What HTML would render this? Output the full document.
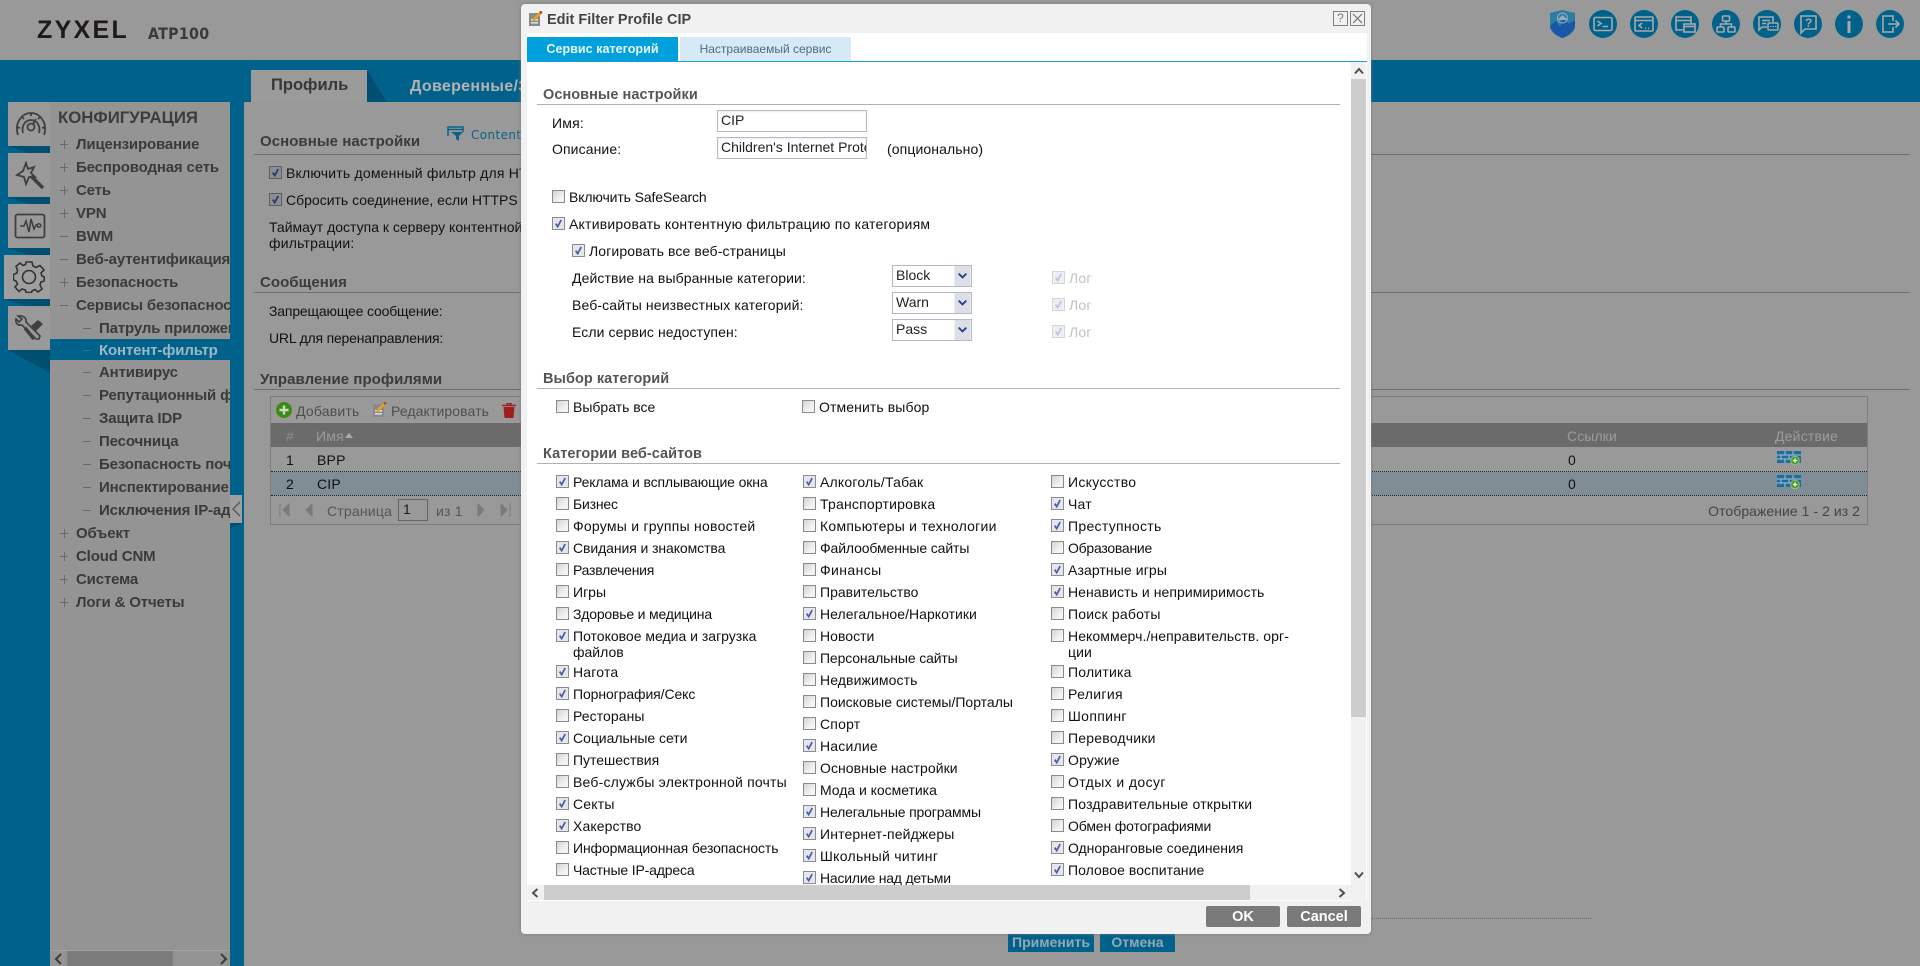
<!DOCTYPE html>
<html lang="ru"><head><meta charset="utf-8"><title>Zyxel ATP100</title>
<style>
html,body{margin:0;padding:0;width:1920px;height:966px;overflow:hidden;background:#00618a}
body{position:relative;font:14px/16px "Liberation Sans","Noto Sans CJK SC",sans-serif;color:#1c1c1c}
div,span,svg,a{position:absolute;white-space:nowrap}
.b{font-weight:bold}
.r{background:#999}
.h{font-weight:bold;font-size:15px;color:#3b3b3b;letter-spacing:.05px}
.l{height:1px;background:#6f6f6f}
.m{font-weight:bold;font-size:15px;color:#3a3a3a;left:76px;letter-spacing:-.15px}
.s{left:99px}
.p{left:60px;width:8px;height:1px;background:#6a6a6a}
.p.plus:after{content:"";position:absolute;left:3.5px;top:-4px;width:1px;height:9px;background:#6a6a6a}
.k{width:13px;height:13px;box-sizing:border-box;border:1px solid #8b8b8b;background:linear-gradient(135deg,#d4d4d4,#f4f4f4 70%);display:block}
.c{padding-left:17px;letter-spacing:.2px;color:#111;height:16px}
.c svg{left:0;top:1px}
.n{letter-spacing:.2px;color:#111}
.g{font-weight:bold;font-size:14.5px;color:#555;letter-spacing:.05px}
.i{box-sizing:border-box;border:1px solid #b5b8c8;background:#fff;height:22px;padding:1px 3px 1px 3px;overflow:hidden;line-height:17px;color:#222;box-shadow:inset 0 1px 2px #eee}
.se{left:892px;width:80px;height:22px;box-sizing:border-box;border:1px solid #b5b8c8;background:#fff;line-height:19px;padding-left:3px;color:#222}
.se svg{right:0;top:0}
.dis{color:#c2c2c2}
.t{fill:none;stroke:#a9a9a9;stroke-width:1.6}
.w{fill:none;stroke:#3f3f3f;stroke-width:1.8}
</style></head><body>
<svg width="0" height="0" style="left:0;top:0"><defs>
<symbol id="ck" viewBox="0 0 13 13"><rect x=".5" y=".5" width="12" height="12" fill="#e8e8e8" stroke="#8b8b8b"/><rect x="2" y="2" width="9" height="9" fill="#e3e6f2"/><path d="M3.7 6.6 5.7 9.6 9.2 3" fill="none" stroke="#4a5b9d" stroke-width="1.7"/></symbol>
<symbol id="cd" viewBox="0 0 13 13"><rect x=".5" y=".5" width="12" height="12" fill="#f0f0f0" stroke="#d5d5d5"/><rect x="2" y="2" width="9" height="9" fill="#eceef6"/><path d="M3.7 6.6 5.7 9.6 9.2 3" fill="none" stroke="#bcc4dd" stroke-width="1.7"/></symbol>
<symbol id="cg" viewBox="0 0 13 13"><rect x=".5" y=".5" width="12" height="12" fill="#8e8e8e" stroke="#5e5e5e"/><rect x="2" y="2" width="9" height="9" fill="#8a8c97"/><path d="M3.7 6.6 5.7 9.6 9.2 3" fill="none" stroke="#2c375f" stroke-width="1.7"/></symbol>
<symbol id="sb" viewBox="0 0 17 21"><rect width="17" height="21" fill="#dcdfe6"/><path d="M4.5 8 8.5 12 12.5 8" fill="none" stroke="#25408a" stroke-width="2"/></symbol>
<symbol id="ed" viewBox="0 0 14 15"><rect x="0" y="2" width="11" height="13" fill="#8a8a8a"/><rect x="2" y="8" width="7" height="1.6" fill="#ddd"/><rect x="2" y="11" width="7" height="1.6" fill="#ddd"/><path d="M4 9 12 1.500" stroke="#e8a016" stroke-width="2.600" fill="none"/><path d="M11 2 12.800.4" stroke="#c0392b" stroke-width="2.600"/></symbol>
<symbol id="fw" viewBox="0 0 24 14"><rect width="24" height="12" fill="#1f6d9c"/><path d="M0 4H24M0 8H17M8 0V4M16 0V4M4 4V8M12 4V8M8 8V12" stroke="#a9c2d0" stroke-width="1" fill="none"/><circle cx="18" cy="9.500" r="4.300" fill="#4a9a22" stroke="#9dbb86"/><path d="M15.800 9.500H20.200M18 7.300V11.700" stroke="#dfe" stroke-width="1.300"/></symbol>
</defs></svg>

<!-- header -->
<div class="r" style="left:0;top:0;width:1920px;height:60px"></div>
<div class="b" style="left:37px;top:15px;font-size:25px;line-height:30px;color:#1f1a17;letter-spacing:2.3px;font-family:'Liberation Sans',sans-serif">ZYXEL</div>
<div class="b" style="left:148px;top:25px;font-size:16px;line-height:18px;color:#3a3a3a;letter-spacing:.3px;font-family:'DejaVu Sans',sans-serif;transform-origin:0 0;transform:scaleX(.89)">ATP100</div>

<svg style="left:1549px;top:9px" width="27" height="30" viewBox="0 0 27 30"><path d="M1 4 13 1 26 4V16C26 23 19 27 13.500 29 8 27 1 23 1 16Z" fill="#2c7da3"/><path d="M1 17 7 12 11 18 14 10 20 15 26 11V16C26 23 19 27 13.500 29 8 27 1 23 1 16Z" fill="#1957a6"/><path d="M13.500 6 19 11H8Z" fill="#9ab" /><circle cx="13.500" cy="9" r="5" fill="none" stroke="#9ab"/></svg>

<svg style="left:1589px;top:10px" width="28" height="28" viewBox="0 0 28 28"><circle cx="14" cy="14" r="14" fill="#00618a"/><rect class="t" x="5" y="7.500" width="18" height="13" rx="1.500"/><path class="t" d="M8.500 11 12 13.500 8.500 16M13.500 16.500H19"/></svg>
<svg style="left:1630px;top:10px" width="28" height="28" viewBox="0 0 28 28"><circle cx="14" cy="14" r="14" fill="#00618a"/><rect class="t" x="5" y="7" width="18" height="14" rx="1"/><path class="t" d="M5 10.500H23M12 13 9 15.500 12 18M15 18.300H16M18 18.300H19"/></svg>
<svg style="left:1671px;top:10px" width="28" height="28" viewBox="0 0 28 28"><circle cx="14" cy="14" r="14" fill="#00618a"/><path class="t" d="M12 20H5V7H20V13M5 10.500H20"/><rect class="t" x="13" y="14" width="11" height="8"/><path class="t" d="M13 16.500H24"/></svg>
<svg style="left:1712px;top:10px" width="28" height="28" viewBox="0 0 28 28"><circle cx="14" cy="14" r="14" fill="#00618a"/><rect class="t" x="10.500" y="6" width="7" height="5" rx="1"/><rect class="t" x="5" y="17" width="7" height="5" rx="1"/><rect class="t" x="16" y="17" width="7" height="5" rx="1"/><path class="t" d="M14 11V14M8.500 17V14H19.500V17"/></svg>
<svg style="left:1753px;top:10px" width="28" height="28" viewBox="0 0 28 28"><circle cx="14" cy="14" r="14" fill="#00618a"/><path class="t" d="M14 17H9L6 20V7H20V12M9 10.500H17M9 13.500H13"/><rect class="t" x="15" y="13" width="10" height="7" rx="1"/><path d="M17 16.500H18.500M19.500 16.500H21M22 16.500H23.500" stroke="#a9a9a9"/></svg>
<svg style="left:1794px;top:10px" width="28" height="28" viewBox="0 0 28 28"><circle cx="14" cy="14" r="14" fill="#00618a"/><path class="t" d="M7 6H22V19H11L7 23Z"/><text x="11" y="17" font-size="12" font-weight="bold" fill="#a9a9a9" font-family="Liberation Sans">?</text></svg>
<svg style="left:1835px;top:10px" width="28" height="28" viewBox="0 0 28 28"><circle cx="14" cy="14" r="14" fill="#00618a"/><rect x="12.500" y="5.500" width="3" height="3" fill="#a9a9a9"/><rect x="12.500" y="11" width="3" height="12" fill="#a9a9a9"/></svg>
<svg style="left:1876px;top:10px" width="28" height="28" viewBox="0 0 28 28"><circle cx="14" cy="14" r="14" fill="#00618a"/><path class="t" d="M17 11V6H7V22H17V17M12 14H23M19.500 10.500 23 14 19.500 17.500"/></svg>

<!-- left tabs -->
<div class="r" style="left:8px;top:102px;width:42px;height:44px"></div>
<svg style="left:8px;top:146px" width="42" height="7"><path d="M0 0H42V7H20Z" fill="#004f70"/></svg>
<div class="r" style="left:8px;top:153px;width:42px;height:44px"></div>
<svg style="left:8px;top:197px" width="42" height="7"><path d="M0 0H42V7H20Z" fill="#004f70"/></svg>
<div class="r" style="left:8px;top:204px;width:42px;height:44px"></div>
<svg style="left:8px;top:248px" width="42" height="7"><path d="M0 0H42V7H20Z" fill="#004f70"/></svg>
<div style="left:4px;top:255px;width:46px;height:44px;background:#9e9e9e"></div>
<svg style="left:4px;top:299px" width="46" height="7"><path d="M0 0H46V7H22Z" fill="#004f70"/></svg>
<div class="r" style="left:8px;top:306px;width:42px;height:44px"></div>
<svg style="left:8px;top:350px" width="42" height="23"><path d="M0 0H42V23Z" fill="#004f70"/></svg>

<svg style="left:14px;top:111px" width="34" height="28" viewBox="0 0 34 28"><path class="w" d="M4 24C0 12 8 2 17 2S34 12 30 24M3 16 6 17M28 17 31 16M17 2V5M8 6 10 8M26 6 24 8M19 13 22 8M9 22C7 14 12 9 17 9S27 14 25 22" fill="none"/><circle class="w" cx="17" cy="16" r="3.500"/></svg>
<svg style="left:15px;top:161px" width="30" height="30" viewBox="0 0 30 30"><path class="w" d="M11 2 13 8 19 6 16 12 20 16 14 16 11 23 9 16 2 14 8 10Z"/><path d="M16 15 28 27" stroke="#3f3f3f" stroke-width="3.500"/></svg>
<svg style="left:14px;top:213px" width="32" height="26" viewBox="0 0 32 26"><rect class="w" x="1.500" y="1.500" width="29" height="23" rx="2"/><path d="M6 13H10L12 8 15 19 17 6 20 16 22 12H24" fill="none" stroke="#3f3f3f" stroke-width="1.600"/><circle cx="25" cy="12.500" r="1.800" fill="none" stroke="#3f3f3f" stroke-width="1.500"/></svg>
<svg style="left:13px;top:261px" width="32" height="32" viewBox="0 0 32 32"><path d="M13 1H19L20 5 23 6.500 27 4.500 31 9 28 12 29 15 31.500 16 31 20 28 21 27 24 29 28 25 31 22 28.500 19 30 18.500 31.500H13L12.500 29 9 28 6 30.500 2 26 4.500 23 3 20 .5 19V13.500L4 12 4.500 9 3 5.500 7 2 10 4.500 12.500 3.500Z" fill="none" stroke="#333" stroke-width="1.600"/><circle cx="16" cy="16" r="6.500" fill="none" stroke="#333" stroke-width="1.600"/></svg>
<svg style="left:14px;top:314px" width="30" height="28" viewBox="0 0 30 28"><path d="M4 2 8 5 5 8 2 5C1 9 4 12 8 11L22 25 25 25 26 22 12 8C13 4 9 1 4 2Z" fill="none" stroke="#3f3f3f" stroke-width="1.600"/><path d="M17 12 24 6 29 10 22 17Z" fill="#3f3f3f"/><path d="M11 14 20 25" stroke="#3f3f3f" stroke-width="3.500"/></svg>

<!-- left menu -->
<div style="left:50px;top:102px;width:180px;height:864px;background:#949494;overflow:hidden">
 <div style="left:8px;top:6px;font-weight:bold;font-size:16.800px;line-height:20px;color:#3c3c3c">КОНФИГУРАЦИЯ</div>
 <div style="left:0;top:237px;width:180px;height:21px;background:#00618a"></div>
 <div style="left:0;top:848px;width:180px;height:1px;background:#a3a3a3"></div>
 <div style="left:17px;top:849px;width:106px;height:15px;background:#7c7c7c"></div>
 <svg style="left:4px;top:851px" width="10" height="12" viewBox="0 0 10 12"><path d="M7 1 2 6 7 11" fill="none" stroke="#3c3c3c" stroke-width="2"/></svg>
 <svg style="left:168px;top:851px" width="10" height="12" viewBox="0 0 10 12"><path d="M3 1 8 6 3 11" fill="none" stroke="#3c3c3c" stroke-width="2"/></svg>
</div>
<div style="left:0;top:0;width:230px;height:966px;overflow:hidden">
<div class="p plus" style="top:144px"></div><div class="m" style="top:137px">Лицензирование</div>
<div class="p plus" style="top:167px"></div><div class="m" style="top:160px">Беспроводная сеть</div>
<div class="p plus" style="top:190px"></div><div class="m" style="top:183px">Сеть</div>
<div class="p plus" style="top:213px"></div><div class="m" style="top:206px">VPN</div>
<div class="p" style="top:236px"></div><div class="m" style="top:229px">BWM</div>
<div class="p" style="top:259px"></div><div class="m" style="top:252px">Веб-аутентификация</div>
<div class="p plus" style="top:282px"></div><div class="m" style="top:275px">Безопасность</div>
<div class="p" style="top:305px"></div><div class="m" style="top:298px">Сервисы безопасности</div>
<div class="p" style="left:83px;top:328px"></div><div class="m s" style="top:321px">Патруль приложений</div>
<div class="p" style="left:83px;top:350px;background:#2d6f8d"></div><div class="m s" style="top:343px;color:#9cb8c5">Контент-фильтр</div>
<div class="p" style="left:83px;top:372px"></div><div class="m s" style="top:365px">Антивирус</div>
<div class="p" style="left:83px;top:395px"></div><div class="m s" style="top:388px">Репутационный фильтр</div>
<div class="p" style="left:83px;top:418px"></div><div class="m s" style="top:411px">Защита IDP</div>
<div class="p" style="left:83px;top:441px"></div><div class="m s" style="top:434px">Песочница</div>
<div class="p" style="left:83px;top:464px"></div><div class="m s" style="top:457px">Безопасность почты</div>
<div class="p" style="left:83px;top:487px"></div><div class="m s" style="top:480px">Инспектирование</div>
<div class="p" style="left:83px;top:510px"></div><div class="m s" style="top:503px">Исключения IP-адресов</div>
<div class="p plus" style="top:533px"></div><div class="m" style="top:526px">Объект</div>
<div class="p plus" style="top:556px"></div><div class="m" style="top:549px">Cloud CNM</div>
<div class="p plus" style="top:579px"></div><div class="m" style="top:572px">Система</div>
<div class="p plus" style="top:602px"></div><div class="m" style="top:595px">Логи &amp; Отчеты</div>
</div>
<div style="left:230px;top:495px;width:12px;height:28px;background:#9f9f9f"></div>
<svg style="left:232px;top:501px" width="9" height="16" viewBox="0 0 9 16"><path d="M8 1 1 8 8 15" fill="none" stroke="#555" stroke-width="1.300"/></svg>
<svg style="left:230px;top:523px" width="14" height="5"><path d="M0 0H14L0 5Z" fill="#004f70"/></svg>

<!-- main tabs -->
<div style="left:251px;top:70px;width:116px;height:32px;background:#9b9b9b"></div>
<svg style="left:367px;top:70px" width="20" height="32"><path d="M0 0 20 32H0Z" fill="#004f70"/></svg>
<div class="b" style="left:271px;top:75px;font-size:16.500px;line-height:20px;color:#373737">Профиль</div>
<div class="b" style="left:410px;top:77px;font-size:16px;line-height:20px;color:#b3b3b3;letter-spacing:.3px">Доверенные/Запрещенные</div>

<!-- main content -->
<div class="r" style="left:244px;top:102px;width:1676px;height:864px"></div>
<svg style="left:447px;top:126px" width="17" height="16" viewBox="0 0 17 16"><path d="M1 10V1H16V6M1 3.500H16" fill="none" stroke="#0a628a" stroke-width="1.500"/><path d="M4 6H16L12 10V15L9 13V10Z" fill="#0a628a"/></svg>
<div style="left:471px;top:127px;font-size:12.500px;color:#0a628a;letter-spacing:.5px;font-family:'DejaVu Sans',sans-serif;transform:scaleX(.95);transform-origin:0 0">Content Filter</div>

<div class="h" style="left:260px;top:134px">Основные настройки</div><div class="l" style="left:254px;top:154px;width:1656px"></div>
<div class="c" style="left:269px;top:165px"><svg width="13" height="13"><use href="#cg"/></svg>Включить доменный фильтр для HTTPS</div>
<div class="c" style="left:269px;top:192px;letter-spacing:0"><svg width="13" height="13"><use href="#cg"/></svg>Сбросить соединение, если HTTPS соединение</div>
<div class="n" style="left:269px;top:219px;letter-spacing:0">Таймаут доступа к серверу контентной</div>
<div class="n" style="left:269px;top:235px">фильтрации:</div>
<div class="h" style="left:260px;top:275px">Сообщения</div><div class="l" style="left:254px;top:292px;width:1656px"></div>
<div class="n" style="left:269px;top:303px;letter-spacing:-.17px">Запрещающее сообщение:</div>
<div class="n" style="left:269px;top:330px;letter-spacing:-.2px">URL для перенаправления:</div>
<div class="h" style="left:260px;top:372px">Управление профилями</div><div class="l" style="left:254px;top:389px;width:1656px"></div>

<!-- grid -->
<div style="left:270px;top:396px;width:1598px;height:129px;box-sizing:border-box;border:1px solid #7d7d7d"></div>
<div style="left:271px;top:423px;width:1596px;height:24px;background:#6b6b6b"></div>
<div style="left:271px;top:472px;width:1596px;height:23px;background:#7f8d96"></div>
<div style="left:271px;top:471px;width:1596px;border-top:1px dotted #222"></div>
<div style="left:271px;top:495px;width:1596px;border-top:1px dotted #222"></div>
<svg style="left:276px;top:402px" width="16" height="16" viewBox="0 0 16 16"><circle cx="8" cy="8" r="8" fill="#3f8a14"/><path d="M3.500 8H12.500M8 3.500V12.500" stroke="#c9dcc0" stroke-width="2.400"/></svg>
<div class="n" style="left:296px;top:403px;color:#4e4e4e">Добавить</div>
<svg style="left:373px;top:402px" width="14" height="15"><use href="#ed"/></svg>
<div class="n" style="left:391px;top:403px;color:#4e4e4e;letter-spacing:.1px">Редактировать</div>
<svg style="left:502px;top:403px" width="14" height="15" viewBox="0 0 14 15"><path d="M0 2.500H14M5 2.500V.5H9V2.500" stroke="#a01e1e" stroke-width="1.500" fill="none"/><path d="M1.500 4H12.500L11.500 15H2.500Z" fill="#a01e1e"/></svg>
<div style="left:286px;top:428px;color:#8e8e8e">#</div>
<div style="left:316px;top:428px;color:#9a9a9a;letter-spacing:.2px">Имя</div>
<svg style="left:345px;top:433px" width="8" height="5"><path d="M0 5 4 0 8 5Z" fill="#aaa"/></svg>
<div style="left:1567px;top:428px;color:#9c9c9c;letter-spacing:.1px">Ссылки</div>
<div style="left:1775px;top:428px;color:#9c9c9c;letter-spacing:.2px">Действие</div>
<div class="n" style="left:286px;top:452px">1</div><div class="n" style="left:317px;top:452px">BPP</div>
<div class="n" style="left:286px;top:476px">2</div><div class="n" style="left:317px;top:476px">CIP</div>
<div class="n" style="left:1568px;top:452px">0</div><div class="n" style="left:1568px;top:476px">0</div>
<svg style="left:1777px;top:451px" width="24" height="14"><use href="#fw"/></svg>
<svg style="left:1777px;top:475px" width="24" height="14"><use href="#fw"/></svg>
<svg style="left:279px;top:503px" width="11" height="14"><path d="M1 0V14M10 1 4 7 10 13Z" fill="#7a7a7a" stroke="#7a7a7a"/></svg>
<svg style="left:305px;top:503px" width="8" height="14"><path d="M7 1 1 7 7 13Z" fill="#7a7a7a" stroke="#7a7a7a"/></svg>
<div class="n" style="left:327px;top:503px;color:#555">Страница</div>
<div style="left:398px;top:499px;width:30px;height:22px;box-sizing:border-box;border:1px solid #666;padding-left:4px;line-height:18px">1</div>
<div class="n" style="left:436px;top:503px;color:#555">из 1</div>
<svg style="left:477px;top:503px" width="8" height="14"><path d="M1 1 7 7 1 13Z" fill="#7a7a7a" stroke="#7a7a7a"/></svg>
<svg style="left:500px;top:503px" width="11" height="14"><path d="M10 0V14M1 1 7 7 1 13Z" fill="#7a7a7a" stroke="#7a7a7a"/></svg>
<div class="n" style="right:60px;top:503px;color:#444;letter-spacing:.05px">Отображение 1 - 2 из 2</div>

<div style="left:1371px;top:918px;width:220px;border-top:1px dotted #6f6f6f"></div>
<div class="b" style="left:1008px;top:934px;width:86px;height:18px;background:#00618a;color:#93a9b3;text-align:center;line-height:17px">Применить</div>
<div class="b" style="left:1100px;top:934px;width:75px;height:18px;background:#00618a;color:#93a9b3;text-align:center;line-height:17px">Отмена</div>

<!-- dialog -->
<div style="left:521px;top:4px;width:850px;height:930px;background:#f1f1f1;border-radius:4px;overflow:hidden;box-shadow:0 0 3px #777">
 <div style="left:6px;top:29px;width:840px;height:868px;background:#fff"></div>
</div>
<svg style="left:529px;top:11px" width="14" height="15"><use href="#ed"/></svg>
<div class="b" style="left:547px;top:12px;font-size:14.500px;color:#444">Edit Filter Profile CIP</div>
<div style="left:1333px;top:11px;width:15px;height:15px;box-sizing:border-box;border:1px solid #808080;text-align:center;font-size:12px;line-height:13px;color:#777">?</div>
<svg style="left:1350px;top:11px" width="15" height="15"><rect x=".5" y=".5" width="14" height="14" fill="none" stroke="#808080"/><path d="M3 3 12 12M12 3 3 12" stroke="#666" stroke-width="1"/></svg>

<div class="b" style="left:527px;top:37px;width:151px;height:25px;background:#00a0dc;color:#e6f6fc;line-height:24px;text-align:center;font-size:12.600px">Сервис категорий</div>
<div style="left:680px;top:37px;width:171px;height:24px;background:#d6e9f7;color:#4d6c80;line-height:24px;text-align:center;font-size:12px">Настраиваемый сервис</div>
<div style="left:527px;top:61px;width:840px;height:1px;background:#1a9fd0"></div>

<!-- vertical scroll -->
<div style="left:1351px;top:62px;width:15px;height:839px;background:#f1f1f1"></div>
<div style="left:1351px;top:79px;width:15px;height:638px;background:#cdcdcd"></div>
<svg style="left:1354px;top:67px" width="10" height="8" viewBox="0 0 10 8"><path d="M1 6.500 5 2 9 6.500" fill="none" stroke="#505050" stroke-width="2"/></svg>
<svg style="left:1354px;top:871px" width="10" height="8" viewBox="0 0 10 8"><path d="M1 1.500 5 6 9 1.500" fill="none" stroke="#505050" stroke-width="2"/></svg>
<!-- horizontal scroll -->
<div style="left:527px;top:885px;width:824px;height:15px;background:#f1f1f1"></div>
<div style="left:544px;top:885px;width:706px;height:15px;background:#cdcdcd"></div>
<svg style="left:531px;top:888px" width="8" height="10" viewBox="0 0 8 10"><path d="M6.500 1 2 5 6.500 9" fill="none" stroke="#505050" stroke-width="2"/></svg>
<svg style="left:1338px;top:888px" width="8" height="10" viewBox="0 0 8 10"><path d="M1.500 1 6 5 1.500 9" fill="none" stroke="#505050" stroke-width="2"/></svg>

<div class="b" style="left:1206px;top:906px;width:74px;height:21px;background:#7a7a7a;border-radius:2px;color:#fff;text-align:center;line-height:23px;font-size:14.500px">OK</div>
<div class="b" style="left:1287px;top:906px;width:74px;height:21px;background:#7a7a7a;border-radius:2px;color:#fff;text-align:center;line-height:23px;font-size:14.500px">Cancel</div>

<div class="g" style="left:543px;top:87px">Основные настройки</div><div class="l" style="left:537px;top:104px;width:803px;background:#b0b0b0"></div>
<div class="n" style="left:552px;top:115px">Имя:</div>
<div class="i" style="left:717px;top:110px;width:150px">CIP</div>
<div class="n" style="left:552px;top:141px;letter-spacing:.1px">Описание:</div>
<div class="i" style="left:717px;top:137px;width:150px">Children's Internet Protection</div>
<div class="n" style="left:887px;top:141px;letter-spacing:.1px">(опционально)</div>

<div class="c" style="left:552px;top:189px;letter-spacing:-.12px"><i class="k" style="position:absolute;left:0;top:1px"></i>Включить SafeSearch</div>
<div class="c" style="left:552px;top:216px;letter-spacing:.22px"><svg width="13" height="13"><use href="#ck"/></svg>Активировать контентную фильтрацию по категориям</div>
<div class="c" style="left:572px;top:243px;letter-spacing:.11px"><svg width="13" height="13"><use href="#ck"/></svg>Логировать все веб-страницы</div>
<div class="n" style="left:572px;top:270px;letter-spacing:.09px">Действие на выбранные категории:</div>
<div class="n" style="left:572px;top:297px;letter-spacing:.13px">Веб-сайты неизвестных категорий:</div>
<div class="n" style="left:572px;top:324px;letter-spacing:.1px">Если сервис недоступен:</div>
<div class="se" style="top:265px">Block<svg width="17" height="20"><use href="#sb"/></svg></div>
<div class="se" style="top:292px">Warn<svg width="17" height="20"><use href="#sb"/></svg></div>
<div class="se" style="top:319px">Pass<svg width="17" height="20"><use href="#sb"/></svg></div>
<div class="c dis" style="left:1052px;top:270px"><svg width="13" height="13"><use href="#cd"/></svg>Лог</div>
<div class="c dis" style="left:1052px;top:297px"><svg width="13" height="13"><use href="#cd"/></svg>Лог</div>
<div class="c dis" style="left:1052px;top:324px"><svg width="13" height="13"><use href="#cd"/></svg>Лог</div>

<div class="g" style="left:543px;top:371px">Выбор категорий</div><div class="l" style="left:537px;top:388px;width:803px;background:#b0b0b0"></div>
<div class="c" style="left:556px;top:399px;letter-spacing:0"><i class="k" style="position:absolute;left:0;top:1px"></i>Выбрать все</div>
<div class="c" style="left:802px;top:399px;letter-spacing:.1px"><i class="k" style="position:absolute;left:0;top:1px"></i>Отменить выбор</div>

<div class="g" style="left:543px;top:446px">Категории веб-сайтов</div><div class="l" style="left:537px;top:463px;width:803px;background:#b0b0b0"></div>

<!-- col 1 -->
<div class="c" style="left:556px;top:474px;letter-spacing:-.13px"><svg width="13" height="13"><use href="#ck"/></svg>Реклама и всплывающие окна</div>
<div class="c" style="left:556px;top:496px;letter-spacing:-.2px"><i class="k" style="position:absolute;left:0;top:1px"></i>Бизнес</div>
<div class="c" style="left:556px;top:518px;letter-spacing:.25px"><i class="k" style="position:absolute;left:0;top:1px"></i>Форумы и группы новостей</div>
<div class="c" style="left:556px;top:540px;letter-spacing:-.09px"><svg width="13" height="13"><use href="#ck"/></svg>Свидания и знакомства</div>
<div class="c" style="left:556px;top:562px;letter-spacing:-.24px"><i class="k" style="position:absolute;left:0;top:1px"></i>Развлечения</div>
<div class="c" style="left:556px;top:584px;letter-spacing:0"><i class="k" style="position:absolute;left:0;top:1px"></i>Игры</div>
<div class="c" style="left:556px;top:606px;letter-spacing:-.19px"><i class="k" style="position:absolute;left:0;top:1px"></i>Здоровье и медицина</div>
<div class="c" style="left:556px;top:628px;letter-spacing:0"><svg width="13" height="13"><use href="#ck"/></svg>Потоковое медиа и загрузка<br>файлов</div>
<div class="c" style="left:556px;top:664px"><svg width="13" height="13"><use href="#ck"/></svg>Нагота</div>
<div class="c" style="left:556px;top:686px;letter-spacing:-.1px"><svg width="13" height="13"><use href="#ck"/></svg>Порнография/Секс</div>
<div class="c" style="left:556px;top:708px;letter-spacing:.07px"><i class="k" style="position:absolute;left:0;top:1px"></i>Рестораны</div>
<div class="c" style="left:556px;top:730px;letter-spacing:-.04px"><svg width="13" height="13"><use href="#ck"/></svg>Социальные сети</div>
<div class="c" style="left:556px;top:752px;letter-spacing:-.02px"><i class="k" style="position:absolute;left:0;top:1px"></i>Путешествия</div>
<div class="c" style="left:556px;top:774px"><i class="k" style="position:absolute;left:0;top:1px"></i>Веб-службы электронной почты</div>
<div class="c" style="left:556px;top:796px"><svg width="13" height="13"><use href="#ck"/></svg>Секты</div>
<div class="c" style="left:556px;top:818px;letter-spacing:.1px"><svg width="13" height="13"><use href="#ck"/></svg>Хакерство</div>
<div class="c" style="left:556px;top:840px;letter-spacing:-.12px"><i class="k" style="position:absolute;left:0;top:1px"></i>Информационная безопасность</div>
<div class="c" style="left:556px;top:862px;letter-spacing:-.16px"><i class="k" style="position:absolute;left:0;top:1px"></i>Частные IP-адреса</div>

<!-- col 2 -->
<div class="c" style="left:803px;top:474px"><svg width="13" height="13"><use href="#ck"/></svg>Алкоголь/Табак</div>
<div class="c" style="left:803px;top:496px"><i class="k" style="position:absolute;left:0;top:1px"></i>Транспортировка</div>
<div class="c" style="left:803px;top:518px;letter-spacing:.25px"><i class="k" style="position:absolute;left:0;top:1px"></i>Компьютеры и технологии</div>
<div class="c" style="left:803px;top:540px;letter-spacing:-.12px"><i class="k" style="position:absolute;left:0;top:1px"></i>Файлообменные сайты</div>
<div class="c" style="left:803px;top:562px;letter-spacing:.4px"><i class="k" style="position:absolute;left:0;top:1px"></i>Финансы</div>
<div class="c" style="left:803px;top:584px;letter-spacing:0"><i class="k" style="position:absolute;left:0;top:1px"></i>Правительство</div>
<div class="c" style="left:803px;top:606px;letter-spacing:.03px"><svg width="13" height="13"><use href="#ck"/></svg>Нелегальное/Наркотики</div>
<div class="c" style="left:803px;top:628px;letter-spacing:.03px"><i class="k" style="position:absolute;left:0;top:1px"></i>Новости</div>
<div class="c" style="left:803px;top:650px;letter-spacing:-.14px"><i class="k" style="position:absolute;left:0;top:1px"></i>Персональные сайты</div>
<div class="c" style="left:803px;top:672px;letter-spacing:.1px"><i class="k" style="position:absolute;left:0;top:1px"></i>Недвижимость</div>
<div class="c" style="left:803px;top:694px;letter-spacing:0"><i class="k" style="position:absolute;left:0;top:1px"></i>Поисковые системы/Порталы</div>
<div class="c" style="left:803px;top:716px"><i class="k" style="position:absolute;left:0;top:1px"></i>Спорт</div>
<div class="c" style="left:803px;top:738px"><svg width="13" height="13"><use href="#ck"/></svg>Насилие</div>
<div class="c" style="left:803px;top:760px;letter-spacing:.06px"><i class="k" style="position:absolute;left:0;top:1px"></i>Основные настройки</div>
<div class="c" style="left:803px;top:782px;letter-spacing:-.03px"><i class="k" style="position:absolute;left:0;top:1px"></i>Мода и косметика</div>
<div class="c" style="left:803px;top:804px;letter-spacing:-.15px"><svg width="13" height="13"><use href="#ck"/></svg>Нелегальные программы</div>
<div class="c" style="left:803px;top:826px;letter-spacing:.14px"><svg width="13" height="13"><use href="#ck"/></svg>Интернет-пейджеры</div>
<div class="c" style="left:803px;top:848px;letter-spacing:.3px"><svg width="13" height="13"><use href="#ck"/></svg>Школьный читинг</div>
<div style="left:803px;top:870px;width:300px;height:15px;overflow:hidden"><div class="c" style="left:0;top:0;letter-spacing:-.21px"><svg width="13" height="13"><use href="#ck"/></svg>Насилие над детьми</div></div>

<!-- col 3 -->
<div class="c" style="left:1051px;top:474px;letter-spacing:.3px"><i class="k" style="position:absolute;left:0;top:1px"></i>Искусство</div>
<div class="c" style="left:1051px;top:496px"><svg width="13" height="13"><use href="#ck"/></svg>Чат</div>
<div class="c" style="left:1051px;top:518px;letter-spacing:.3px"><svg width="13" height="13"><use href="#ck"/></svg>Преступность</div>
<div class="c" style="left:1051px;top:540px;letter-spacing:-.25px"><i class="k" style="position:absolute;left:0;top:1px"></i>Образование</div>
<div class="c" style="left:1051px;top:562px;letter-spacing:.1px"><svg width="13" height="13"><use href="#ck"/></svg>Азартные игры</div>
<div class="c" style="left:1051px;top:584px;letter-spacing:.06px"><svg width="13" height="13"><use href="#ck"/></svg>Ненависть и непримиримость</div>
<div class="c" style="left:1051px;top:606px"><i class="k" style="position:absolute;left:0;top:1px"></i>Поиск работы</div>
<div class="c" style="left:1051px;top:628px;letter-spacing:.08px"><i class="k" style="position:absolute;left:0;top:1px"></i>Некоммерч./неправительств. орг-<br>ции</div>
<div class="c" style="left:1051px;top:664px"><i class="k" style="position:absolute;left:0;top:1px"></i>Политика</div>
<div class="c" style="left:1051px;top:686px;letter-spacing:.35px"><i class="k" style="position:absolute;left:0;top:1px"></i>Религия</div>
<div class="c" style="left:1051px;top:708px;letter-spacing:.35px"><i class="k" style="position:absolute;left:0;top:1px"></i>Шоппинг</div>
<div class="c" style="left:1051px;top:730px"><i class="k" style="position:absolute;left:0;top:1px"></i>Переводчики</div>
<div class="c" style="left:1051px;top:752px"><svg width="13" height="13"><use href="#ck"/></svg>Оружие</div>
<div class="c" style="left:1051px;top:774px;letter-spacing:.4px"><i class="k" style="position:absolute;left:0;top:1px"></i>Отдых и досуг</div>
<div class="c" style="left:1051px;top:796px"><i class="k" style="position:absolute;left:0;top:1px"></i>Поздравительные открытки</div>
<div class="c" style="left:1051px;top:818px;letter-spacing:-.14px"><i class="k" style="position:absolute;left:0;top:1px"></i>Обмен фотографиями</div>
<div class="c" style="left:1051px;top:840px;letter-spacing:-.05px"><svg width="13" height="13"><use href="#ck"/></svg>Одноранговые соединения</div>
<div class="c" style="left:1051px;top:862px;letter-spacing:.06px"><svg width="13" height="13"><use href="#ck"/></svg>Половое воспитание</div>
</body></html>
